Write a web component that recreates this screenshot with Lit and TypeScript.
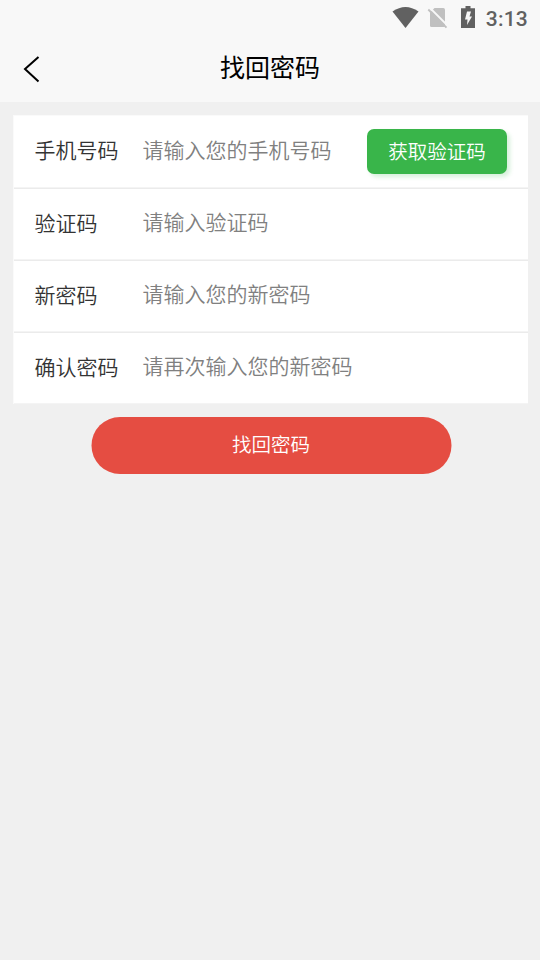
import { LitElement, html, css } from "lit";
import { customElement } from "lit/decorators.js";

@customElement("app-root")
export class AppRoot extends LitElement {
  static styles = css`
    :host { display: block; height: 960px; background: #f0f0f0; font-family: "Noto Sans CJK SC", sans-serif; box-sizing: border-box; overflow: hidden; }
    * { box-sizing: border-box; }
    .top { background: #f8f8f8; height: 102px; }
    .status { height: 36px; display: flex; justify-content: flex-end; padding-right: 12px; color: #616161; }
    .status svg { display: block; width: 90px; height: 36px; margin-right: 5px; }
    .time { font: 500 21px/38px Roboto, sans-serif; width: 43px; text-align: right; white-space: nowrap; letter-spacing: 0.2px; }
    .nav { height: 66px; display: grid; grid-template-columns: 60px 1fr 60px; }
    .back { display: block; width: 60px; height: 66px; }
    h1 { margin: 0; font-weight: 400; font-size: 25px; line-height: 61px; height: 66px; text-align: center; color: #000; }
    .card { margin: 13px 12px 0 13px; background: #fff; height: 289px; border-top: 1px solid #fafafa; border-left: 1px solid #fafafa; }
    .row { height: 72px; display: flex; padding-left: 20.5px; padding-right: 21px; border-top: 1px solid #ebebeb; border-bottom: 1px solid #f4f4f4; font-size: 21px; font-weight: 350; }
    .row:first-child { border-top-color: #fff; }
    .label { width: 108px; color: #333; line-height: 66px; }
    .row:first-child .label { line-height: 65px; }
    .hint { flex: 1; color: #808080; line-height: 64px; }
    .code { width: 140px; height: 45px; margin-top: 12px; border-radius: 7px; background: #39b54a; color: #fff; font-size: 19.5px; line-height: 43px; text-align: center; box-shadow: 3px 3px 4px rgba(57,181,74,.2); }
    .submit { width: 360px; height: 57px; margin: 13px 0 0 92px; padding-right: 1px; transform: translateX(-0.5px); border-radius: 29px; background: #e54d42; color: #fff; font-size: 19.5px; font-weight: 350; line-height: 54px; text-align: center; }
  `;
  render() {
    const rows = [["手机号码", "请输入您的手机号码"], ["验证码", "请输入验证码"], ["新密码", "请输入您的新密码"], ["确认密码", "请再次输入您的新密码"]];
    return html`
      <div class="top">
        <div class="status">
          <svg viewBox="390 0 90 36">
            <path d="M392.5 11.5Q405.5 2.500 418.500 11.500L405.500 28Z" fill="#616161"/>
            <path d="M434.500 8H443.300Q445 8 445 9.700V25.500Q445 27 443.500 27H431.500Q430 27 430 25.500V12.500Z" fill="#c0c0c0"/>
            <path d="M430.500 8.500L448 26" stroke="#f8f8f8" stroke-width="1.800"/>
            <path d="M428.300 9.500L446.500 27.700" stroke="#c0c0c0" stroke-width="1.900"/>
            <path fill="#616161" d="M465.500 6h5v2.300h4.500V28H461V8.300h4.500Z"/>
            <path fill="#f8f8f8" d="M467 11.500h4l-1.500 5h2.500L467 25l.500-5.500h-2.500Z"/>
          </svg>
          <div class="time">3:13</div>
        </div>
        <div class="nav">
          <svg class="back" viewBox="0 36 60 66"><path d="M38.500 57L25 69L38.500 81.500" fill="none" stroke="#000" stroke-width="2"/></svg>
          <h1>找回密码</h1>
        </div>
      </div>
      <div class="card">
        ${rows.map(([l, h], i) => html`<div class="row"><div class="label">${l}</div><div class="hint">${h}</div>${i === 0 ? html`<div class="code">获取验证码</div>` : ""}</div>`)}
      </div>
      <div class="submit">找回密码</div>
    `;
  }
}
